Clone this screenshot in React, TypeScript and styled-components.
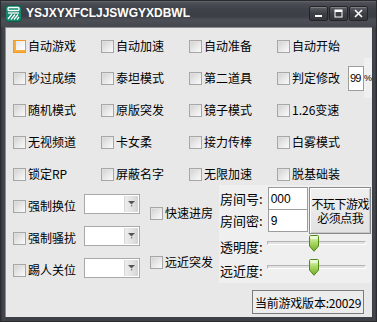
import React from 'react';
import styled, { createGlobalStyle } from 'styled-components';

const Global = createGlobalStyle`
  html, body { margin: 0; padding: 0; background: #3c3f45; }
  * { box-sizing: border-box; }
`;

const Window = styled.div`
  width: 377px;
  height: 322px;
  display: flex;
  flex-direction: column;
  background: linear-gradient(to right, #2f3237, #44474d 2px, #3d4046 5px, #3d4046 372px, #484b51 374px, #2c2f33);
  border: 1px solid #2a2c30;
  overflow: hidden;
`;

const TitleBar = styled.div`
  height: 26px;
  flex: none;
  display: flex;
  align-items: center;
  padding: 0 8px 2px 4px;
  background: linear-gradient(to bottom, #63666b 0px, #4a4d53 2px, #3f4248 8px, #3b3e44 15px, #4c4f55 19px, #44474d 26px);
`;

const AppIcon = styled.svg`
  width: 17px;
  height: 17px;
  flex: none;
`;

const Title = styled.div`
  margin-left: 4px;
  font-family: "Liberation Sans", Arial, sans-serif;
  font-weight: bold;
  font-size: 12px;
  color: #ffffff;
  letter-spacing: 0px;
  flex: 1;
`;

const WinButtons = styled.div`
  display: flex;
  gap: 1px;
`;

const WinBtn = styled.div`
  width: 19px;
  height: 15px;
  border: 1px solid #222428;
  border-radius: 2px;
  background: linear-gradient(to bottom, #5b5e64, #3c3f44 50%, #34373c);
  box-shadow: inset 0 1px 0 #7a7d82;
  display: flex;
  align-items: center;
  justify-content: center;
`;

const Client = styled.div`
  flex: 1;
  margin: 0 4px 4px 4px;
  background: #e8e8e8;
  border-left: 1px solid #8c8e92;
  border-top: 1px solid #8c8e92;
  display: flex;
  flex-direction: column;
  padding: 2px 0 0 7px;
  font-family: "Noto Sans CJK SC", "Liberation Sans", sans-serif;
  color: #000;
`;

const CheckGrid = styled.div`
  display: grid;
  grid-template-columns: repeat(4, 88px);
  grid-auto-rows: 32px;
  align-items: center;
`;

const Cell = styled.div`
  display: flex;
  align-items: center;
  white-space: nowrap;
`;

const CheckItem = styled.label`
  display: flex;
  flex: none;
  align-items: center;
  height: 14px;
  white-space: nowrap;
`;

const Box = styled.span<{ $focused?: boolean }>`
  width: 13px;
  height: 13px;
  flex: none;
  border: 1px solid ${p => (p.$focused ? '#f29a1f' : '#a6a6a6')};
  background: ${p =>
    p.$focused
      ? 'linear-gradient(135deg, #e4e4e4, #fafafa 70%, #ffffff)'
      : 'linear-gradient(135deg, #cfcfcf, #e9e9e9 55%, #fbfbfb)'};
  box-shadow: ${p => (p.$focused ? 'inset 2px -2px 0 #f7ad3c' : 'inset 1px 1px 0 #e2e2e2')};
`;

const Label = styled.span`
  margin-left: 2px;
  font-size: 12px;
  line-height: 14px;
`;

const PercentInput = styled.div`
  flex: none;
  margin-left: 8px;
  width: 16px;
  height: 25px;
  background: #fff;
  border: 1px solid #9c9c9c;
  font-family: "Liberation Sans", Arial, sans-serif;
  font-size: 11px;
  display: flex;
  align-items: center;
  padding-left: 1px;
  letter-spacing: -0.8px;
  overflow: hidden;
`;

const Percent = styled.span`
  flex: none;
  height: 40px;
  width: 8px;
  background: #f0f0f0;
  display: flex;
  align-items: center;
  font-family: "Liberation Sans", Arial, sans-serif;
  font-size: 9px;
  overflow: hidden;
`;

const Lower = styled.div`
  display: flex;
  height: 96px;
`;

const LeftCol = styled.div`
  width: 137px;
  display: flex;
  flex-direction: column;
`;

const ComboRow = styled.div`
  height: 32px;
  display: flex;
  align-items: center;
`;

const ComboLabelWrap = styled.div`
  width: 71px;
  flex: none;
`;

const Combo = styled.div`
  width: 56px;
  height: 20px;
  margin-top: -5px;
  border: 1px solid #a9a9a9;
  background: #fff;
  display: flex;
  justify-content: flex-end;
  padding: 1px;
`;

const ComboButton = styled.div`
  width: 14px;
  height: 100%;
  background: linear-gradient(to right, #ececec, #e2e2e2 60%, #d2d2d2);
  border-left: 1px solid #d6d6d6;
  display: flex;
  align-items: center;
  justify-content: center;
`;

const MidCol = styled.div`
  width: 69px;
  display: flex;
  flex-direction: column;
  padding-top: 16px;
  gap: 35px;
`;

const RightPanel = styled.div`
  width: 152px;
  margin-top: -5px;
  height: 98px;
  background: #efefef;
  display: flex;
  flex-direction: column;
  padding-top: 2px;
`;

const TopBlock = styled.div`
  display: flex;
  height: 47px;
`;

const FieldLabels = styled.div`
  width: 49px;
  display: flex;
  flex-direction: column;
`;

const FieldLabel = styled.div`
  height: 22px;
  display: flex;
  align-items: center;
  padding-left: 1px;
  font-size: 13px;
  white-space: nowrap;
`;

const Inputs = styled.div`
  width: 41px;
  display: flex;
  flex-direction: column;
`;

const TextInput = styled.div`
  height: 23px;
  margin-bottom: -1px;
  background: #fff;
  border: 1px solid #9c9c9c;
  font-family: "Liberation Sans", Arial, sans-serif;
  font-size: 12px;
  display: flex;
  align-items: center;
  padding-left: 2px;
`;

const BigButton = styled.div`
  width: 62px;
  height: 47px;
  margin-left: 1px;
  border: 1px solid #8a8a8a;
  background: linear-gradient(to bottom, #f0f0f0, #e2e2e2);
  box-shadow: inset 1px 1px 0 #ffffff, inset -1px -1px 0 #c8c8c8;
  display: flex;
  flex-direction: column;
  align-items: center;
  justify-content: center;
  font-size: 12px;
  line-height: 14px;
  letter-spacing: -0.5px;
  white-space: nowrap;
`;

const SliderRow = styled.div`
  height: 24px;
  display: flex;
  align-items: center;
`;

const SliderLabel = styled.div`
  width: 48px;
  font-size: 13px;
  padding-left: 1px;
  white-space: nowrap;
`;

const Track = styled.div`
  position: relative;
  width: 99px;
  height: 4px;
  margin-top: -6px;
  background: #e2e2e2;
  border: 1px solid #b4b4b4;
  border-bottom-color: #ffffff;
  border-right-color: #ffffff;
`;

const Thumb = styled.svg`
  position: absolute;
  top: -7px;
  width: 10px;
  height: 17px;
`;

const Footer = styled.div`
  display: flex;
  justify-content: flex-end;
  padding: 4px 8px 0 0;
`;

const VersionBox = styled.div`
  width: 112px;
  height: 24px;
  border: 1px solid #7c7c7c;
  background: #ececec;
  display: flex;
  align-items: center;
  justify-content: center;
  font-size: 12px;
  white-space: nowrap;
  letter-spacing: -0.2px;
`;

const rows = [
  ['自动游戏', '自动加速', '自动准备', '自动开始'],
  ['秒过成绩', '泰坦模式', '第二道具', '判定修改'],
  ['随机模式', '原版突发', '镜子模式', '1.26变速'],
  ['无视频道', '卡女柔', '接力传棒', '白雾模式'],
  ['锁定RP', '屏蔽名字', '无限加速', '脱基础装'],
];

const Check = ({ label, focused }: { label: string; focused?: boolean }) => (
  <CheckItem>
    <Box $focused={focused} />
    <Label>{label}</Label>
  </CheckItem>
);

const ThumbIcon = ({ left }: { left: number }) => (
  <Thumb viewBox="0 0 10 17" style={{ left }}>
    <defs>
      <linearGradient id="tg" x1="0" y1="0" x2="0" y2="1">
        <stop offset="0" stopColor="#f4fbe8" />
        <stop offset="0.35" stopColor="#b8e07a" />
        <stop offset="1" stopColor="#6fae1e" />
      </linearGradient>
    </defs>
    <path d="M1.5 0.5 H8.5 Q9.5 0.5 9.5 1.5 V11 L5 16.3 L0.5 11 V1.5 Q0.5 0.5 1.5 0.5 Z" fill="url(#tg)" stroke="#4f8a12" strokeWidth="1" />
    <path d="M2 3 H8" stroke="#ffffff" strokeWidth="1" />
  </Thumb>
);

const ComboBox = () => (
  <Combo>
    <ComboButton>
      <svg width="7" height="6" viewBox="0 0 7 6">
        <path d="M0 0 H7 L3.5 3.5 Z" fill="#555" />
        <rect x="3" y="4" width="1.2" height="1.5" fill="#22b14c" />
      </svg>
    </ComboButton>
  </Combo>
);

export default function App() {
  return (
    <>
      <Global />
      <Window>
        <TitleBar>
          <AppIcon viewBox="0 0 17 17">
            <rect x="0.5" y="0.5" width="16" height="16" rx="3" fill="#14876d" stroke="#0c5a48" />
            <rect x="3" y="2.5" width="11" height="3" rx="1" fill="none" stroke="#fff" strokeWidth="1.3" />
            <path d="M3 8 H14" stroke="#fff" strokeWidth="1.3" />
            <path d="M3 14 L7 9 M6 14.5 L10 9.5 M9 14.5 L13 9.5 M12 14.5 L14 12" stroke="#fff" strokeWidth="1.3" />
          </AppIcon>
          <Title>YSJXYXFCLJJSWGYXDBWL</Title>
          <WinButtons>
            <WinBtn>
              <svg width="9" height="9" viewBox="0 0 9 9"><rect x="1" y="6" width="7" height="2" fill="#fff" /></svg>
            </WinBtn>
            <WinBtn>
              <svg width="9" height="9" viewBox="0 0 9 9"><rect x="1" y="1" width="7" height="7" fill="none" stroke="#fff" strokeWidth="1" /><rect x="1" y="1" width="7" height="2" fill="#fff" /></svg>
            </WinBtn>
            <WinBtn>
              <svg width="9" height="9" viewBox="0 0 9 9"><path d="M1 1 L8 8 M8 1 L1 8" stroke="#fff" strokeWidth="1.6" /></svg>
            </WinBtn>
          </WinButtons>
        </TitleBar>
        <Client>
          <CheckGrid>
            {rows.map((r, ri) =>
              r.map((label, ci) => (
                <Cell key={`${ri}-${ci}`}>
                  <Check label={label} focused={ri === 0 && ci === 0} />
                  {ri === 1 && ci === 3 && (
                    <>
                      <PercentInput>99</PercentInput>
                      <Percent>%</Percent>
                    </>
                  )}
                </Cell>
              ))
            )}
          </CheckGrid>
          <Lower>
            <LeftCol>
              {['强制换位', '强制骚扰', '踢人关位'].map(l => (
                <ComboRow key={l}>
                  <ComboLabelWrap>
                    <Check label={l} />
                  </ComboLabelWrap>
                  <ComboBox />
                </ComboRow>
              ))}
            </LeftCol>
            <MidCol>
              <Check label="快速进房" />
              <Check label="远近突发" />
            </MidCol>
            <RightPanel>
              <TopBlock>
                <FieldLabels>
                  <FieldLabel>房间号:</FieldLabel>
                  <FieldLabel>房间密:</FieldLabel>
                </FieldLabels>
                <Inputs>
                  <TextInput>000</TextInput>
                  <TextInput>9</TextInput>
                </Inputs>
                <BigButton>
                  <span>不玩下游戏</span>
                  <span>必须点我</span>
                </BigButton>
              </TopBlock>
              <SliderRow>
                <SliderLabel>透明度:</SliderLabel>
                <Track>
                  <ThumbIcon left={41} />
                </Track>
              </SliderRow>
              <SliderRow>
                <SliderLabel>远近度:</SliderLabel>
                <Track>
                  <ThumbIcon left={41} />
                </Track>
              </SliderRow>
            </RightPanel>
          </Lower>
          <Footer>
            <VersionBox>当前游戏版本:20029</VersionBox>
          </Footer>
        </Client>
      </Window>
    </>
  );
}
